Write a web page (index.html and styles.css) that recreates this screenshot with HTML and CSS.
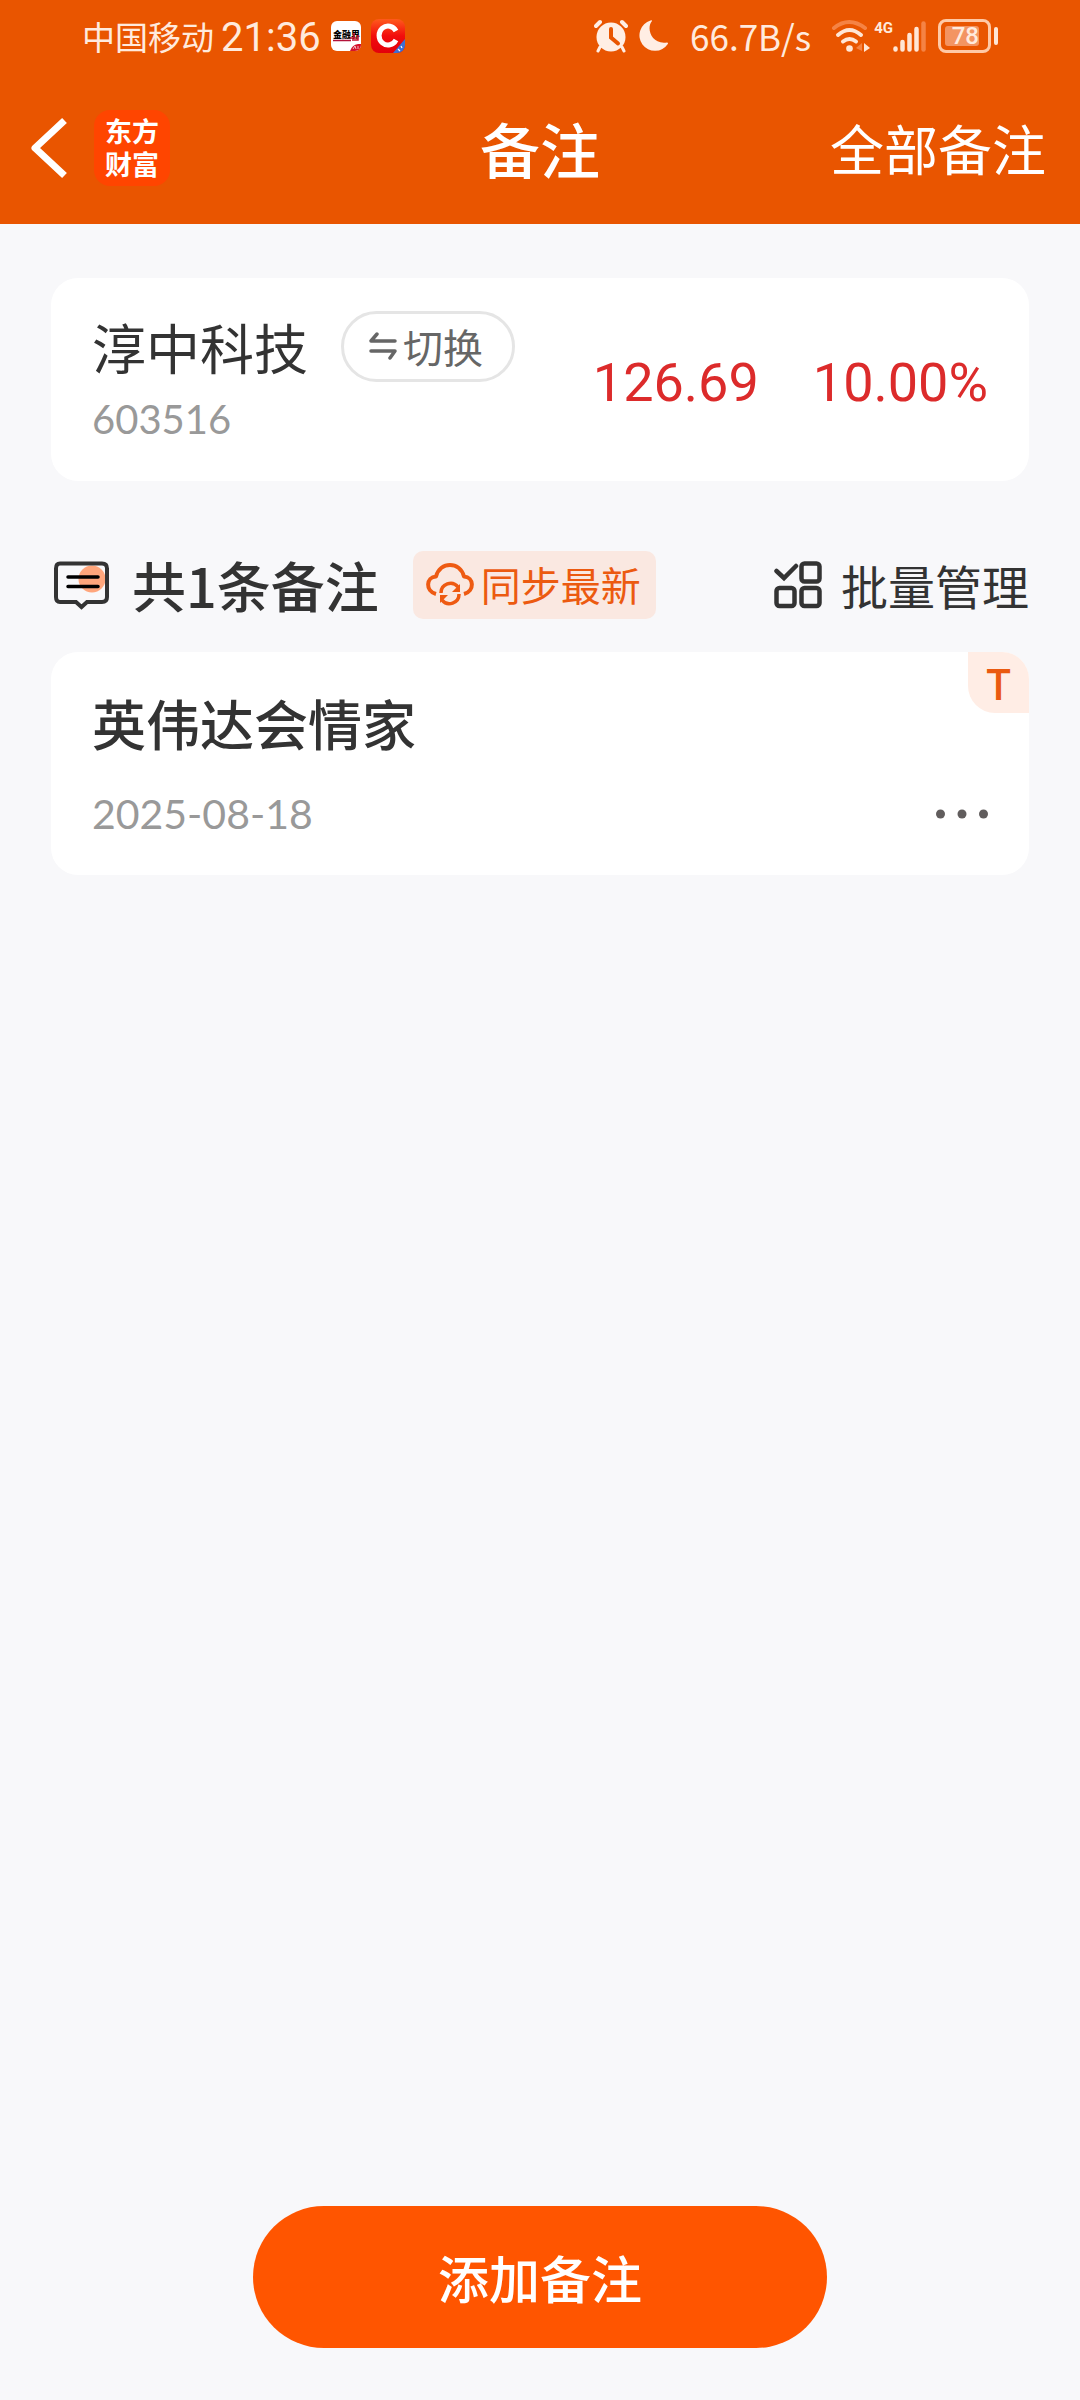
FILE: index.html
```html
<!DOCTYPE html>
<html lang="zh-CN">
<head>
<meta charset="utf-8">
<meta name="viewport" content="width=device-width, initial-scale=1">
<title>备注</title>
<link rel="stylesheet" href="styles.css">
</head>
<body>
<div class="page">
  <header class="header">
    <div class="status">
      <div class="status-left">
        <span class="carrier">中国移动</span>
        <span class="time">21:36</span>
        <svg class="app-icon" width="30" height="30" viewBox="0 0 30 30" aria-hidden="true">
          <defs><clipPath id="app-clip"><rect width="30" height="30" rx="6"/></clipPath></defs>
          <g clip-path="url(#app-clip)">
            <rect width="30" height="30" fill="#fff"/>
            <text x="2" y="17" class="app-name">金融界</text>
            <path d="M23 12v5M19 17h6M27 14v5h-6" fill="none" stroke="#c8102e" stroke-width="1.500"/>
            <path d="M2 19.500h18" stroke="#b3123a" stroke-width="1.500"/>
            <path d="M30 23v7H19q2-6 8-7z" fill="#d5122b"/>
            <path d="M22 28l2-3 1 3M27 25v3" fill="none" stroke="#fff" stroke-width=".7"/>
          </g>
        </svg>
        <svg class="app-icon" width="34" height="34" viewBox="0 0 34 34" aria-hidden="true">
          <defs>
            <linearGradient id="c-fill" x1="0" y1="0" x2="0" y2="1"><stop offset="0" stop-color="#ff5a1c"/><stop offset=".5" stop-color="#f20d0d"/><stop offset="1" stop-color="#e3000b"/></linearGradient>
            <clipPath id="c-clip"><rect width="34" height="34" rx="8"/></clipPath>
          </defs>
          <g clip-path="url(#c-clip)">
            <rect width="34" height="34" fill="url(#c-fill)"/>
            <path d="M25 12A9 9.500 0 1 0 25 21" fill="none" stroke="#fff" stroke-width="5"/>
            <path d="M34 20v14H22z" fill="#3b6fd6"/>
            <path d="M27 30l2 2M30 27l1 2" stroke="#fff" stroke-width="1.200"/>
          </g>
        </svg>
      </div>
      <div class="status-right">
        <svg width="34" height="34" viewBox="0 0 34 34" aria-hidden="true">
          <circle cx="17" cy="18" r="14.500" fill="#ffeee4"/>
          <path d="M6 28l-2 4M28 28l2 4" stroke="#ffeee4" stroke-width="3" stroke-linecap="round"/>
          <path d="M2 7l4-4M32 7l-4-4" stroke="#ffeee4" stroke-width="4" stroke-linecap="round"/>
          <path d="M17 10v8.500l7 6" fill="none" stroke="#e95500" stroke-width="4" stroke-linecap="round"/>
        </svg>
        <svg class="moon" width="31" height="34" viewBox="0 0 31 34" aria-hidden="true">
          <path d="M14 2C8 9 13 26 29 23.500q1.500 0 .8 1.500A15.500 15.500 0 1 1 12.500 1.500Q14.500 1 14 2z" fill="#ffeee4"/>
        </svg>
        <span class="speed">66.7B/s</span>
        <svg class="wifi" width="40" height="34" viewBox="0 0 40 34" aria-hidden="true">
          <g fill="none" stroke-width="4" stroke-linecap="round" stroke="#ffe6d6">
            <path d="M3 9q15-12 31 0" stroke="#f58344"/>
            <path d="M7 16q11.500-10 23 0M12 22.500q6.500-5 13 0"/>
          </g>
          <circle cx="18.500" cy="29.500" r="3.300" fill="#ffe6d6"/>
          <path d="M31 24v8l-6-3z" fill="#f58344"/><path d="M33 24l6 5-6 4z" fill="#ffe6d6"/>
        </svg>
        <span class="network">4G</span>
        <svg width="33" height="34" viewBox="0 0 33 34" aria-hidden="true">
          <g fill="none" stroke-width="4.500" stroke-linecap="round" stroke="#ffe6d6">
            <path d="M2.500 29.500v1M9.500 23v7.500M16.500 16v14.500M23.500 10v20.500"/>
            <path d="M30.500 4.500v26" stroke="#f58344"/>
          </g>
        </svg>
        <div class="battery"><span class="battery-level">78</span></div>
      </div>
    </div>
    <nav class="nav">
      <div class="nav-left">
        <button class="back" type="button" aria-label="返回">
          <svg width="38" height="64" viewBox="0 0 38 64" aria-hidden="true"><path d="M34.500 4.500L5 32l29.500 27.500" fill="none" stroke="#fff" stroke-width="7" stroke-linejoin="round"/></svg>
        </button>
        <div class="logo">东方<br>财富</div>
      </div>
      <h1 class="title">备注</h1>
      <a class="all-notes" href="#">全部备注</a>
    </nav>
  </header>

  <main class="main">
    <section class="card stock">
      <div class="stock-info">
        <div class="stock-line">
          <span class="stock-name">淳中科技</span>
          <button class="switch" type="button">
            <svg width="28" height="28" viewBox="0 0 28 28" aria-hidden="true"><path d="M26 9H2l6-7M2 19h24l-5 7" fill="none" stroke="#666" stroke-width="3.500" stroke-linecap="round" stroke-linejoin="round"/></svg>
            <span>切换</span>
          </button>
        </div>
        <div class="stock-code">603516</div>
      </div>
      <div class="quote"><span>126.69</span><span>10.00%</span></div>
    </section>

    <div class="toolbar">
      <svg width="60" height="50" viewBox="0 0 60 50" aria-hidden="true">
        <circle cx="41" cy="19" r="13.500" fill="#ffa67c"/>
        <path d="M9 3.500H51Q56 3.500 56 8.500V37Q56 42 51 42H36L30.500 47 25 42H9Q5 42 5 37V8.500Q5 3.500 9 3.500z" fill="none" stroke="#333" stroke-width="4"/>
        <path d="M17 17h30M17 26.500h30" stroke="#000" stroke-width="3.500" stroke-linecap="round"/>
      </svg>
      <h2 class="count">共1条备注</h2>
      <button class="sync" type="button">
        <svg width="48" height="44" viewBox="0 0 48 44" aria-hidden="true">
          <g fill="none" stroke="#ee5a12" stroke-width="4">
            <path d="M10 32C-1 29 0 15 10 14.500C14-1 34-1 38 14.500C48 15 49 29 38 32" stroke-linejoin="round"/>
            <path d="M15 31a9.500 9.500 0 0 1 17-6M33 32a9.500 9.500 0 0 1-17 6" stroke-width="3.500"/>
          </g>
          <path d="M34 22v8h-8zM14 41v-8h8z" fill="#ee5a12"/>
        </svg>
        <span>同步最新</span>
      </button>
      <button class="manage" type="button">
        <svg width="48" height="48" viewBox="0 0 48 48" aria-hidden="true">
          <g fill="none" stroke="#333" stroke-width="4.500">
            <path d="M2.500 10l7.500 7L22 5" stroke-linecap="round"/>
            <rect x="27.500" y="2.500" width="18" height="18" rx="3"/>
            <rect x="2.500" y="27" width="18" height="18" rx="3"/>
            <rect x="27.500" y="27" width="18" height="18" rx="3"/>
          </g>
        </svg>
        <span>批量管理</span>
      </button>
    </div>

    <article class="card note">
      <span class="tag">T</span>
      <h3 class="note-title">英伟达会情家</h3>
      <div class="note-meta">
        <time datetime="2025-08-18">2025-08-18</time>
        <button class="more" type="button" aria-label="更多">
          <svg width="52" height="10" viewBox="0 0 52 10" aria-hidden="true"><g fill="#615d5d"><circle cx="4.500" cy="5" r="4.500"/><circle cx="26" cy="5" r="4.500"/><circle cx="47.500" cy="5" r="4.500"/></g></svg>
        </button>
      </div>
    </article>
  </main>

  <footer class="footer"><button class="add" type="button">添加备注</button></footer>
</div>
</body>
</html>
```
FILE: styles.css
```css
* { box-sizing: border-box; }
body {
  margin: 0;
  background: #f8f8fa;
  color: #333;
  font-family: "Noto Sans CJK SC", "Noto Sans", sans-serif;
}
button {
  margin: 0;
  padding: 0;
  border: 0;
  background: none;
  color: inherit;
  font: inherit;
  cursor: pointer;
}
h1, h2, h3 { margin: 0; font-weight: 500; }
svg { display: block; flex: none; }

.page { display: flex; flex-direction: column; min-height: 100vh; }

/* Header */
.header { background: #e95500; color: #fff; }
.status {
  display: flex;
  align-items: center;
  justify-content: space-between;
  height: 72px;
  padding: 0 82px;
  color: #ffeadd;
  line-height: 48px;
}
.status-left, .status-right { display: flex; align-items: center; }
.carrier { font-size: 33px; }
.time { margin-left: 7px; padding-top: 4px; font-family: Roboto, sans-serif; font-size: 40px; font-weight: 400; }
.app-icon { margin-left: 10px; }
.app-name { font-size: 9px; font-weight: 900; }
.moon { margin-left: 10px; }
.speed { margin-left: 21px; font-size: 35px; }
.wifi { margin-left: 20px; }
.network { align-self: flex-start; margin-left: 3px; font: 700 15px/32px Roboto, sans-serif; }
.battery {
  position: relative;
  width: 53px;
  height: 34px;
  margin: 0 7px 0 12px;
  padding: 4px;
  border: 3px solid #ffc9a6;
  border-radius: 8px;
}
.battery::after {
  content: "";
  position: absolute;
  top: 5px;
  right: -10px;
  width: 4px;
  height: 18px;
  border-radius: 2px;
  background: #ffe6d6;
}
.battery-level {
  display: block;
  width: 34px;
  height: 20px;
  border-radius: 3px;
  background: #f39462;
  font: 500 24px/21px Roboto, sans-serif;
  text-align: right;
}

.nav {
  display: grid;
  grid-template-columns: 1fr auto 1fr;
  align-items: center;
  height: 152px;
  padding: 0 30px;
}
.nav-left { display: flex; align-items: center; gap: 26px; }
.logo {
  width: 76px;
  height: 76px;
  padding-top: 4px;
  border-radius: 16px;
  background: #ff4500;
  font-size: 27px;
  font-weight: 700;
  line-height: 33px;
  text-align: center;
}
.title { font-size: 60px; line-height: 80px; }
.all-notes {
  justify-self: end;
  padding-right: 4px;
  color: #fff;
  font-size: 54px;
  line-height: 72px;
  text-decoration: none;
}

/* Content */
.main { flex: 1; padding: 54px 51px; }
.card { border-radius: 27px; background: #fff; }

.stock { display: flex; align-items: center; justify-content: space-between; padding: 0 41px; }
.stock-info { padding: 33px 0 38px; }
.stock-line { display: flex; align-items: center; gap: 33px; height: 71px; }
.stock-name { font-size: 54px; line-height: 72px; }
.switch {
  display: flex;
  align-items: center;
  gap: 6px;
  height: 71px;
  padding: 0 29px 2px 25px;
  border: 3px solid #e5e5e5;
  border-radius: 36px;
  color: #666;
  font-size: 40px;
  line-height: 48px;
}
.stock-code { margin-top: 13px; color: #999; font-family: Lato, sans-serif; font-size: 40px; line-height: 48px; }
.quote {
  display: flex;
  gap: 54px;
  padding-top: 6px;
  color: #dc2b2b;
  font-family: Roboto, sans-serif;
  font-size: 54px;
  line-height: 72px;
}

.toolbar { display: flex; align-items: center; margin: 70px 0 33px; }
.count { margin-left: 21px; font-size: 54px; line-height: 68px; }
.sync {
  display: flex;
  align-items: center;
  gap: 7px;
  height: 68px;
  margin-left: 34px;
  padding: 0 15px 3px 13px;
  border-radius: 10px;
  background: #fae8e1;
  color: #ec5a10;
  font-size: 40px;
  line-height: 48px;
}
.manage { display: flex; align-items: center; gap: 19px; margin-left: auto; font-size: 47px; line-height: 68px; }

.note { position: relative; padding: 39px 41px 37px; }
.tag {
  position: absolute;
  top: 0;
  right: 0;
  width: 61px;
  height: 61px;
  border-radius: 0 27px;
  background: #ffede5;
  color: #ea5a10;
  font-size: 42px;
  font-weight: 500;
  line-height: 60px;
  text-align: center;
}
.note-title { font-size: 54px; line-height: 64px; }
.note-meta {
  display: flex;
  align-items: center;
  justify-content: space-between;
  margin-top: 35px;
  color: #999;
  font-family: Lato, sans-serif;
  font-size: 41px;
  line-height: 48px;
}

.footer { display: flex; justify-content: center; padding: 0 51px 52px; }
.add {
  width: 574px;
  height: 142px;
  border-radius: 71px;
  background: #ff5500;
  color: #fff;
  font-size: 51px;
  font-weight: 500;
  line-height: 68px;
}
```
